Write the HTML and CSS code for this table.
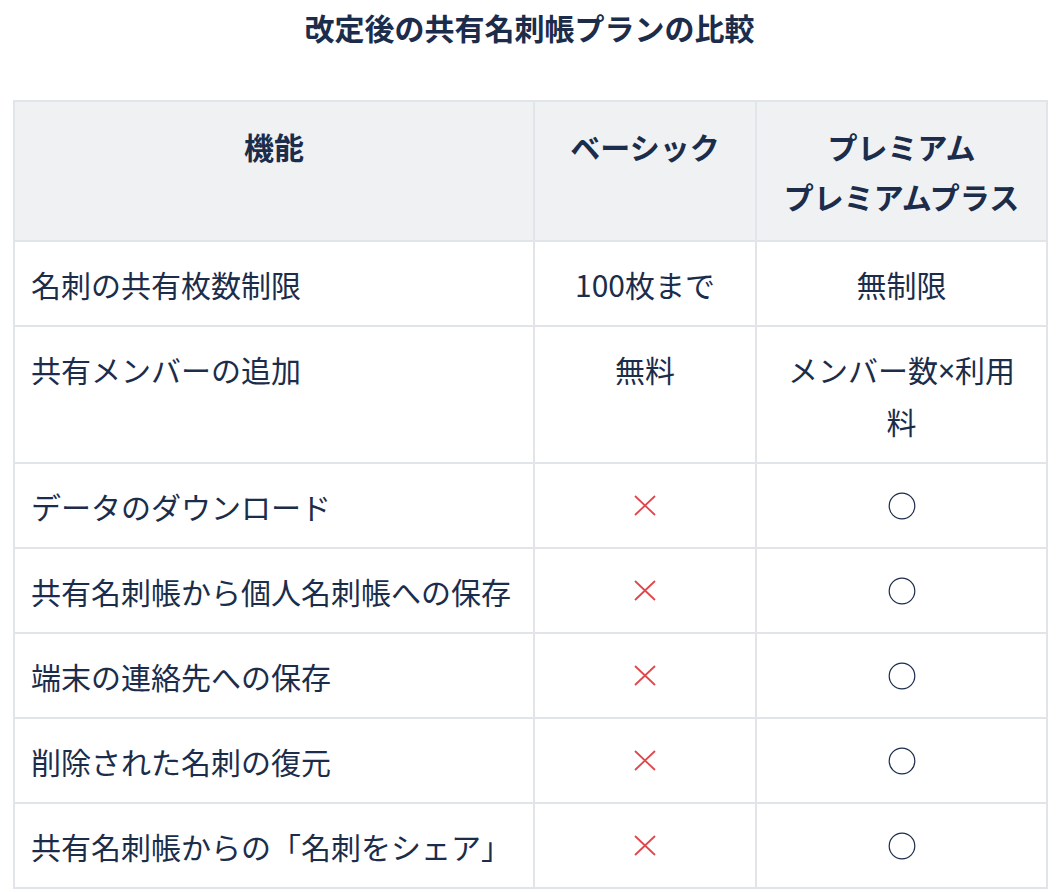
FILE: index.html
```html
<!DOCTYPE html>
<html lang="ja">
<head>
<meta charset="utf-8">
<title>改定後の共有名刺帳プランの比較</title>
<link rel="stylesheet" href="styles.css">
</head>
<body>
<main class="page">
  <h2 class="title">改定後の共有名刺帳プランの比較</h2>
  <table class="compare">
    <colgroup>
      <col class="c-feature">
      <col class="c-basic">
      <col class="c-premium">
    </colgroup>
    <thead>
      <tr>
        <th>機能</th>
        <th>ベーシック</th>
        <th>プレミアム<br>プレミアムプラス</th>
      </tr>
    </thead>
    <tbody>
      <tr>
        <td>名刺の共有枚数制限</td>
        <td class="center">100枚まで</td>
        <td class="center">無制限</td>
      </tr>
      <tr>
        <td>共有メンバーの追加</td>
        <td class="center">無料</td>
        <td class="center">メンバー数<span class="times">×</span>利用<br>料</td>
      </tr>
      <tr>
        <td>データのダウンロード</td>
        <td class="center"><svg class="ng" viewBox="0 0 22 21" aria-label="×"><path d="M1 1L21 20M21 1L1 20"/></svg></td>
        <td class="center"><svg class="ok" viewBox="0 0 28 28" aria-label="○"><circle cx="14" cy="14" r="12.8"/></svg></td>
      </tr>
      <tr>
        <td>共有名刺帳から個人名刺帳への保存</td>
        <td class="center"><svg class="ng" viewBox="0 0 22 21" aria-label="×"><path d="M1 1L21 20M21 1L1 20"/></svg></td>
        <td class="center"><svg class="ok" viewBox="0 0 28 28" aria-label="○"><circle cx="14" cy="14" r="12.8"/></svg></td>
      </tr>
      <tr>
        <td>端末の連絡先への保存</td>
        <td class="center"><svg class="ng" viewBox="0 0 22 21" aria-label="×"><path d="M1 1L21 20M21 1L1 20"/></svg></td>
        <td class="center"><svg class="ok" viewBox="0 0 28 28" aria-label="○"><circle cx="14" cy="14" r="12.8"/></svg></td>
      </tr>
      <tr>
        <td>削除された名刺の復元</td>
        <td class="center"><svg class="ng" viewBox="0 0 22 21" aria-label="×"><path d="M1 1L21 20M21 1L1 20"/></svg></td>
        <td class="center"><svg class="ok" viewBox="0 0 28 28" aria-label="○"><circle cx="14" cy="14" r="12.8"/></svg></td>
      </tr>
      <tr>
        <td>共有名刺帳からの「名刺をシェア」</td>
        <td class="center"><svg class="ng" viewBox="0 0 22 21" aria-label="×"><path d="M1 1L21 20M21 1L1 20"/></svg></td>
        <td class="center"><svg class="ok" viewBox="0 0 28 28" aria-label="○"><circle cx="14" cy="14" r="12.8"/></svg></td>
      </tr>
    </tbody>
  </table>
</main>
</body>
</html>
```

FILE: styles.css
```css
html, body {
  margin: 0;
  padding: 0;
  background: #ffffff;
}

body {
  font-family: "Noto Sans CJK JP", "Noto Sans", sans-serif;
  color: #1b2d4b;
}

.page {
  padding: 2px 11px 0 13px;
}

.title {
  margin: 0 0 48px;
  font-size: 30px;
  font-weight: 700;
  line-height: 50px;
  text-align: center;
  color: #1b2d4b;
}

.compare {
  width: 1033px;
  border-collapse: collapse;
  table-layout: fixed;
  font-size: 30px;
  line-height: 50px;
}

.c-feature { width: 520px; }
.c-basic { width: 222px; }
.c-premium { width: 291px; }

.compare th,
.compare td {
  border: 2px solid #e1e4e9;
  vertical-align: top;
}

.compare th {
  background: #f0f1f3;
  font-weight: 700;
  text-align: center;
  padding: 19px 16px;
}

.compare td {
  padding: 16.5px 16px;
  height: 50px;
  font-weight: 400;
  text-align: left;
}

.compare td.center {
  text-align: center;
}

.times {
  font-family: "Noto Sans", sans-serif;
}

.ng {
  width: 22px;
  height: 21px;
  vertical-align: 2.5px;
  fill: none;
  stroke: #e0474c;
  stroke-width: 1.8;
}

.ok {
  width: 28px;
  height: 28px;
  vertical-align: -1px;
  fill: none;
  stroke: #1b2d4b;
  stroke-width: 1.2;
}
```
